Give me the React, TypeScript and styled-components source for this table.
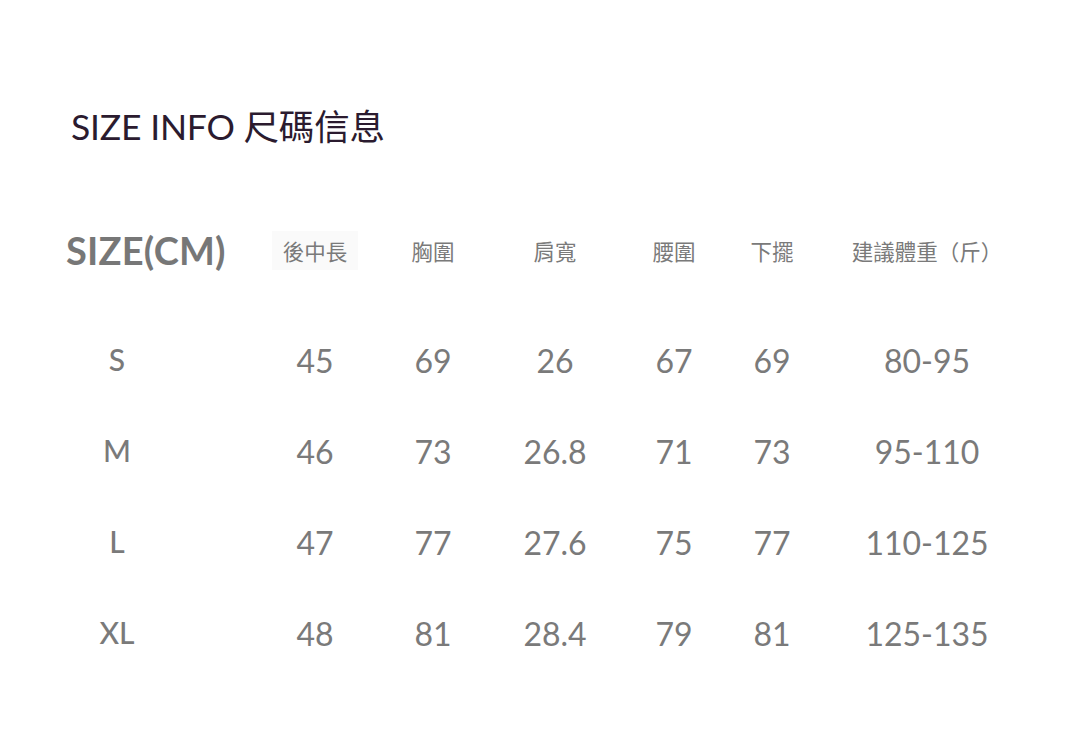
import React from "react";
import styled, { createGlobalStyle } from "styled-components";

const Global = createGlobalStyle`
  html, body { margin: 0; padding: 0; background: #ffffff; }
  body { font-family: Lato, "Noto Sans CJK TC", sans-serif; }
`;

const Page = styled.div`
  width: 1080px;
  height: 754px;
  box-sizing: border-box;
  padding: 106px 0 0 66px;
  background: #fff;
`;

const Title = styled.h1`
  margin: 0 0 0 5px;
  font-family: Lato, "Noto Sans CJK TC", sans-serif;
  font-weight: 400;
  font-size: 35.5px;
  line-height: 42px;
  color: #2b1b2f;
  letter-spacing: -0.2px;
`;

const Table = styled.div`
  margin-top: 77px;
  display: grid;
  grid-template-columns: 191px 116px 120px 124px 114px 82px 228px;
  grid-template-rows: 50px 38px;
  grid-auto-rows: 91px;
`;

const Row = styled.div`
  display: contents;
`;

const HeadLabel = styled.div`
  display: flex;
  align-items: center;
  font-family: Lato, sans-serif;
  font-weight: 700;
  font-size: 38px;
  color: #777777;
  white-space: nowrap;
  letter-spacing: 0.2px;
`;

const HeadCell = styled.div`
  display: flex;
  align-items: center;
  justify-content: center;
`;

const HeadText = styled.span<{ $shade?: boolean }>`
  font-family: "Noto Sans CJK TC", sans-serif;
  font-size: 21.5px;
  color: #7a7a7a;
  padding: 4px 11px;
  background: ${(p) => (p.$shade ? "#fafafa" : "transparent")};
  white-space: nowrap;
`;

const Spacer = styled.div`
  grid-column: 1 / -1;
`;

const SizeCell = styled.div`
  display: flex;
  align-items: center;
`;

const SizeLetter = styled.span`
  width: 102px;
  text-align: center;
  font-family: Lato, sans-serif;
  font-weight: 500;
  font-size: 30px;
  color: #7a7a7a;
`;

const DataCell = styled.div`
  display: flex;
  align-items: center;
  justify-content: center;
  font-family: Lato, sans-serif;
  font-size: 32px;
  color: #7a7a7a;
  padding-top: 4px;
  letter-spacing: 0;
`;

const headers = [
  { t: "後中長", shade: true },
  { t: "胸圍" },
  { t: "肩寬" },
  { t: "腰圍" },
  { t: "下擺" },
  { t: "建議體重（斤）" },
];

const rows = [
  ["S", "45", "69", "26", "67", "69", "80-95"],
  ["M", "46", "73", "26.8", "71", "73", "95-110"],
  ["L", "47", "77", "27.6", "75", "77", "110-125"],
  ["XL", "48", "81", "28.4", "79", "81", "125-135"],
];

export default function App() {
  return (
    <>
      <Global />
      <Page>
        <Title>SIZE INFO 尺碼信息</Title>
        <Table>
          <Row>
            <HeadLabel>SIZE(CM)</HeadLabel>
            {headers.map((h) => (
              <HeadCell key={h.t}>
                <HeadText $shade={h.shade}>{h.t}</HeadText>
              </HeadCell>
            ))}
          </Row>
          <Spacer />
          {rows.map((r) => (
            <Row key={r[0]}>
              <SizeCell>
                <SizeLetter>{r[0]}</SizeLetter>
              </SizeCell>
              {r.slice(1).map((v, i) => (
                <DataCell key={i}>{v}</DataCell>
              ))}
            </Row>
          ))}
        </Table>
      </Page>
    </>
  );
}
